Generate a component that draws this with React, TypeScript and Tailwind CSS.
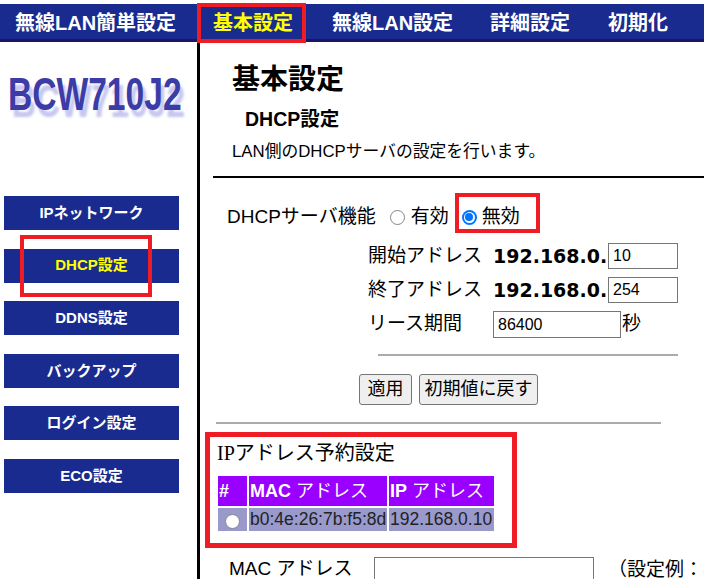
import React from "react";

function Radio({ checked }: { checked?: boolean }) {
  if (checked) {
    return (
      <span className="inline-flex w-[15px] h-[15px] rounded-full bg-[#0075ff] items-center justify-center shrink-0">
        <span className="inline-flex w-[11px] h-[11px] rounded-full bg-white items-center justify-center">
          <span className="block w-[8px] h-[8px] rounded-full bg-[#0075ff]" />
        </span>
      </span>
    );
  }
  return <span className="inline-block w-[15px] h-[15px] rounded-full bg-white border border-[#858585] shrink-0" />;
}

const navItems: { label: string; w: string; active?: boolean }[] = [
  { label: "無線LAN簡単設定", w: "w-[198px]" },
  { label: "基本設定", w: "w-[119px]", active: true },
  { label: "無線LAN設定", w: "w-[158px]" },
  { label: "詳細設定", w: "w-[118px]" },
  { label: "初期化", w: "w-[80px]" },
];

const sideItems = ["IPネットワーク", "DHCP設定", "DDNS設定", "バックアップ", "ログイン設定", "ECO設定"];

export default function App() {
  return (
    <div className="relative w-[704px] h-[579px] overflow-hidden bg-white text-black font-['Liberation_Sans','Noto_Sans_CJK_JP',sans-serif]">
      {/* top nav */}
      <div className="mt-[4px] h-[38px] bg-[#192b8f] border-b-[3px] border-[#1d1464] flex items-center pl-[15px] pt-[2px]">
        {navItems.map((n) => (
          <div
            key={n.label}
            className={`${n.w} shrink-0 text-[20px] font-bold leading-[24px] whitespace-nowrap ${n.active ? "text-[#ffff00]" : "text-white"}`}
          >
            {n.label}
          </div>
        ))}
      </div>

      <div className="flex h-[537px]">
        {/* sidebar */}
        <div className="w-[200px] shrink-0 border-r-[3px] border-black">
          <div className="mt-[29px] h-[46px] pl-[8px] whitespace-nowrap">
            <span className="inline-block origin-left scale-x-[0.73] text-[46px] leading-[46px] font-bold text-[#3c3ca6] [text-shadow:5px_7px_3px_#c6c6f0]">
              BCW710J2
            </span>
          </div>
          <div className="mt-[79px] flex flex-col gap-[18.6px] pl-[4px]">
            {sideItems.map((s) => (
              <div
                key={s}
                className={`w-[175px] h-[34px] shrink-0 bg-[#192b8f] flex items-center justify-center text-[15px] font-bold ${s === "DHCP設定" ? "text-[#ffff00]" : "text-white"}`}
              >
                {s}
              </div>
            ))}
          </div>
        </div>

        {/* main */}
        <div className="flex-1 min-w-0">
          <div className="pt-[20px]">
            <div className="h-[36px] pl-[32px] flex items-center text-[28px] font-bold">基本設定</div>
          </div>
          <div className="mt-[10px] h-[24px] pl-[45px] flex items-center text-[19.5px] font-bold">DHCP設定</div>
          <div className="mt-[9px] h-[22px] pl-[32px] flex items-center text-[16.8px] whitespace-nowrap">
            LAN側のDHCPサーバの設定を行います。
          </div>
          <div className="mt-[13px] ml-[13px] h-[2px] bg-black" />

          <div className="mt-[24px] h-[30px] pl-[27px] flex items-center text-[19px] whitespace-nowrap">
            <span>DHCPサーバ機能</span>
            <span className="ml-[14px] flex"><Radio /></span>
            <span className="ml-[6px]">有効</span>
            <span className="ml-[13px] flex"><Radio checked /></span>
            <span className="ml-[5px]">無効</span>
          </div>

          <div className="mt-[11px] flex flex-col gap-[8px] pl-[168px] text-[19px] whitespace-nowrap">
            <div className="h-[26px] flex items-center">
              <span className="w-[125px]">開始アドレス</span>
              <span className="w-[115px] font-bold font-['DejaVu_Sans',sans-serif]">192.168.0.</span>
              <div className="w-[70px] h-[26px] border border-[#767676] bg-white flex items-center pl-[4px] text-[16px]">10</div>
            </div>
            <div className="h-[26px] flex items-center">
              <span className="w-[125px]">終了アドレス</span>
              <span className="w-[115px] font-bold font-['DejaVu_Sans',sans-serif]">192.168.0.</span>
              <div className="w-[70px] h-[26px] border border-[#767676] bg-white flex items-center pl-[4px] text-[16px]">254</div>
            </div>
            <div className="h-[27px] flex items-center">
              <span className="w-[125px]">リース期間</span>
              <div className="w-[128px] h-[27px] border border-[#767676] bg-white flex items-center pl-[4px] text-[16px]">86400</div>
              <span className="ml-[1px]">秒</span>
            </div>
          </div>

          <div className="mt-[16px] ml-[178px] w-[300px] h-[2px] bg-[#ababab]" />

          <div className="mt-[18px] pl-[159px] flex gap-[7px]">
            <div className="w-[53px] h-[31px] bg-[#efefef] border border-[#767676] rounded-[3px] flex items-center justify-center text-[18px]">適用</div>
            <div className="w-[119px] h-[31px] bg-[#efefef] border border-[#767676] rounded-[3px] flex items-center justify-center text-[18px]">初期値に戻す</div>
          </div>

          <div className="mt-[17px] ml-[16px] w-[445px] h-[2px] bg-[#ababab]" />

          <div className="mt-[17px] h-[24px] pl-[17px] flex items-center text-[20px] font-['Liberation_Serif','Noto_Sans_CJK_JP',serif]">IPアドレス予約設定</div>

          <div className="mt-[11px] ml-[18px] grid grid-cols-[29px_138px_105px] gap-[2px] text-[18px] whitespace-nowrap w-max">
            <div className="h-[30px] bg-[#9900ff] text-white font-bold flex items-center pl-[1px]">#</div>
            <div className="h-[30px] bg-[#9900ff] text-white flex items-center pl-[1px]">
              <span className="font-bold">MAC</span>
              <span className="ml-[5px]">アドレス</span>
            </div>
            <div className="h-[30px] bg-[#9900ff] text-white flex items-center pl-[1px]">
              <span className="font-bold">IP</span>
              <span className="ml-[5px]">アドレス</span>
            </div>
            <div className="h-[23px] bg-[#9999cc] flex items-center justify-center pt-[4px]"><Radio /></div>
            <div className="h-[23px] bg-[#9999cc] flex items-center pl-[1px] text-[#222] text-[17.5px]">b0:4e:26:7b:f5:8d</div>
            <div className="h-[23px] bg-[#9999cc] flex items-center pl-[1px] text-[#222] text-[17.5px]">192.168.0.10</div>
          </div>

          <div className="mt-[26px] flex items-start text-[19px] whitespace-nowrap">
            <span className="pl-[29px] w-[174px] h-[24px] flex items-center shrink-0">MAC アドレス</span>
            <div className="w-[220px] h-[30px] border border-[#767676] bg-white shrink-0" />
            <span className="ml-[14px] h-[24px] mt-[1px] flex items-center shrink-0">（設定例：(</span>
          </div>
        </div>
      </div>

      {/* annotation boxes */}
      <div className="absolute left-[197px] top-[3px] w-[109px] h-[40px] border-4 border-[#ee1c25]" />
      <div className="absolute left-[20px] top-[235px] w-[132px] h-[62px] border-4 border-[#ee1c25]" />
      <div className="absolute left-[455px] top-[193px] w-[85px] h-[40px] border-4 border-[#ee1c25]" />
      <div className="absolute left-[205px] top-[432px] w-[312px] h-[116px] border-[5px] border-[#ee1c25]" />
    </div>
  );
}
